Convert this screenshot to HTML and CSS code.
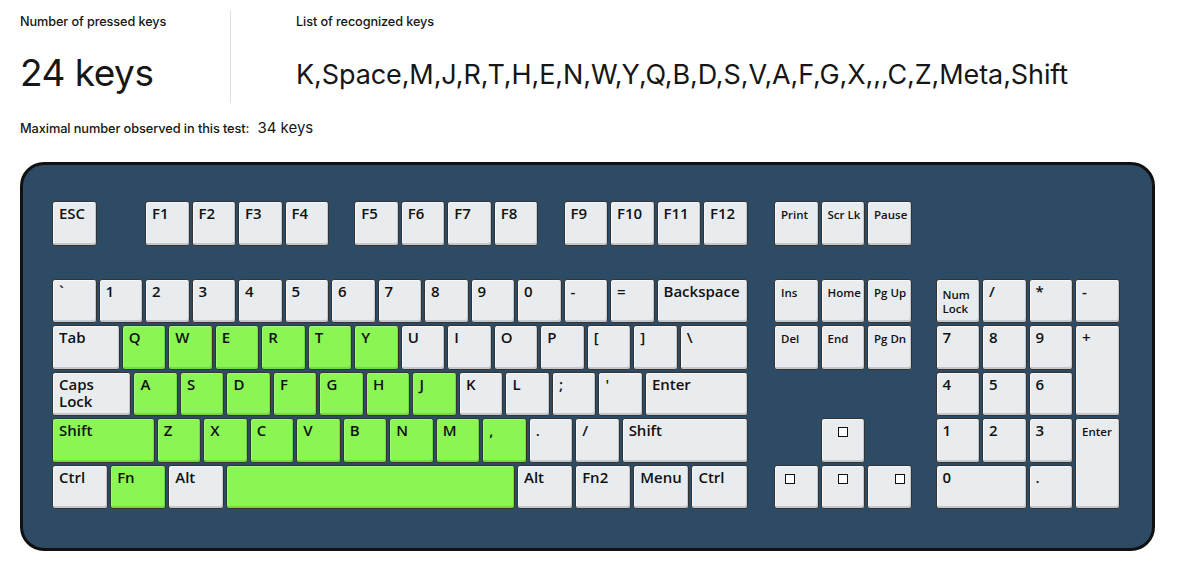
FILE: index.html
```html
<!DOCTYPE html>
<html lang="en">
<head>
<meta charset="utf-8">
<title>Keyboard test</title>
<link rel="stylesheet" href="styles.css">
</head>
<body>
<div class="page">
  <header class="stats">
    <div class="stat stat-count">
      <div class="stat-label">Number of pressed keys</div>
      <div class="stat-value">24 keys</div>
    </div>
    <div class="stat stat-list">
      <div class="stat-label">List of recognized keys</div>
      <div class="stat-list-value">K,Space,M,J,R,T,H,E,N,W,Y,Q,B,D,S,V,A,F,G,X,,,C,Z,Meta,Shift</div>
    </div>
  </header>
  <div class="max">
    <span class="max-label">Maximal number observed in this test:</span>
    <span class="max-value">34 keys</span>
  </div>

  <div class="keyboard">
    <div class="frow">
      <div class="key w1">ESC</div>
      <div class="sp-1"></div>
      <div class="key w1">F1</div>
      <div class="key w1">F2</div>
      <div class="key w1">F3</div>
      <div class="key w1">F4</div>
      <div class="sp-half"></div>
      <div class="key w1">F5</div>
      <div class="key w1">F6</div>
      <div class="key w1">F7</div>
      <div class="key w1">F8</div>
      <div class="sp-half"></div>
      <div class="key w1">F9</div>
      <div class="key w1">F10</div>
      <div class="key w1">F11</div>
      <div class="key w1">F12</div>
      <div class="sp-nav"></div>
      <div class="key w1 small">Print</div>
      <div class="key w1 small">Scr Lk</div>
      <div class="key w1 small">Pause</div>
    </div>

    <div class="lower">
      <div class="main">
        <div class="row">
          <div class="key w1">`</div>
          <div class="key w1">1</div>
          <div class="key w1">2</div>
          <div class="key w1">3</div>
          <div class="key w1">4</div>
          <div class="key w1">5</div>
          <div class="key w1">6</div>
          <div class="key w1">7</div>
          <div class="key w1">8</div>
          <div class="key w1">9</div>
          <div class="key w1">0</div>
          <div class="key w1">-</div>
          <div class="key w1">=</div>
          <div class="key w2">Backspace</div>
        </div>
        <div class="row">
          <div class="key w15">Tab</div>
          <div class="key w1 on">Q</div>
          <div class="key w1 on">W</div>
          <div class="key w1 on">E</div>
          <div class="key w1 on">R</div>
          <div class="key w1 on">T</div>
          <div class="key w1 on">Y</div>
          <div class="key w1">U</div>
          <div class="key w1">I</div>
          <div class="key w1">O</div>
          <div class="key w1">P</div>
          <div class="key w1">[</div>
          <div class="key w1">]</div>
          <div class="key w15">\</div>
        </div>
        <div class="row">
          <div class="key w175 two"><span class="ln">Caps</span><span class="ln">Lock</span></div>
          <div class="key w1 on">A</div>
          <div class="key w1 on">S</div>
          <div class="key w1 on">D</div>
          <div class="key w1 on">F</div>
          <div class="key w1 on">G</div>
          <div class="key w1 on">H</div>
          <div class="key w1 on">J</div>
          <div class="key w1">K</div>
          <div class="key w1">L</div>
          <div class="key w1">;</div>
          <div class="key w1">'</div>
          <div class="key w225">Enter</div>
        </div>
        <div class="row">
          <div class="key w225 on">Shift</div>
          <div class="key w1 on">Z</div>
          <div class="key w1 on">X</div>
          <div class="key w1 on">C</div>
          <div class="key w1 on">V</div>
          <div class="key w1 on">B</div>
          <div class="key w1 on">N</div>
          <div class="key w1 on">M</div>
          <div class="key w1 on">,</div>
          <div class="key w1">.</div>
          <div class="key w1">/</div>
          <div class="key w275">Shift</div>
        </div>
        <div class="row">
          <div class="key w125">Ctrl</div>
          <div class="key w125 on">Fn</div>
          <div class="key w125">Alt</div>
          <div class="key w625 on"></div>
          <div class="key w125">Alt</div>
          <div class="key w125">Fn2</div>
          <div class="key w125">Menu</div>
          <div class="key w125">Ctrl</div>
        </div>
      </div>

      <div class="nav">
        <div class="key small">Ins</div>
        <div class="key small">Home</div>
        <div class="key small">Pg Up</div>
        <div class="key small">Del</div>
        <div class="key small">End</div>
        <div class="key small">Pg Dn</div>
        <div class="key arrow arrow-up"><span class="sq"></span></div>
        <div class="key arrow arrow-left r5"><span class="sq"></span></div>
        <div class="key arrow arrow-down r5"><span class="sq"></span></div>
        <div class="key arrow arrow-right r5"><span class="sq"></span></div>
      </div>

      <div class="numpad">
        <div class="key small two numlock"><span class="ln">Num</span><span class="ln">Lock</span></div>
        <div class="key">/</div>
        <div class="key">*</div>
        <div class="key">-</div>
        <div class="key">7</div>
        <div class="key">8</div>
        <div class="key">9</div>
        <div class="key tall">+</div>
        <div class="key">4</div>
        <div class="key">5</div>
        <div class="key">6</div>
        <div class="key">1</div>
        <div class="key">2</div>
        <div class="key">3</div>
        <div class="key tall small">Enter</div>
        <div class="key wide">0</div>
        <div class="key">.</div>
      </div>
    </div>
  </div>
</div>
</body>
</html>
```

FILE: styles.css
```css
* { box-sizing: border-box; }

html, body {
  margin: 0;
  padding: 0;
  background: #ffffff;
}

body {
  font-family: "Inter", "Noto Sans", "Liberation Sans", sans-serif;
  color: #161616;
}

.page {
  padding: 10px 20px 0 20px;
}

/* ---------- header stats ---------- */
.stats {
  display: flex;
  height: 93px;
}

.stat-count {
  width: 211px;
  border-right: 1px solid #e0e0e0;
}

.stat-list {
  padding-left: 65px;
}

.stat-label {
  font-size: 12.7px;
  line-height: 18px;
  font-weight: 500;
  padding-top: 3px;
  letter-spacing: -0.1px;
}

.stat-value {
  font-size: 37px;
  line-height: 48px;
  font-weight: 400;
  margin-top: 18px;
  letter-spacing: -0.5px;
}

.stat-list-value {
  font-size: 27px;
  line-height: 40px;
  font-weight: 400;
  margin-top: 24px;
  letter-spacing: -0.1px;
}

.max {
  margin-top: 16px;
  height: 18px;
  line-height: 18px;
  display: flex;
  align-items: baseline;
  gap: 8px;
}

.max-label {
  font-size: 12.8px;
  font-weight: 500;
  letter-spacing: -0.1px;
}

.max-value {
  font-size: 15px;
  font-weight: 400;
}

/* ---------- keyboard ---------- */
.keyboard {
  margin-top: 25px;
  width: 1135px;
  height: 389px;
  background: #2d4b65;
  border: 3px solid #111111;
  border-radius: 24px;
  padding: 36px 0 0 29px;
  font-family: "Open Sans", "Noto Sans", "Liberation Sans", sans-serif;
}

.frow {
  display: flex;
  gap: 2px;
  height: 44.5px;
  margin-bottom: 33px;
}

.sp-1 { width: 44.5px; }
.sp-half { width: 21.25px; }
.sp-nav { width: 22.5px; }

.lower {
  display: flex;
  align-items: flex-start;
}

.main {
  display: flex;
  flex-direction: column;
  gap: 2px;
}

.row {
  display: flex;
  gap: 2px;
  height: 44.5px;
}

.key {
  height: 44.5px;
  background: #e9ecef;
  border: 1.5px solid #333333;
  border-radius: 3px;
  box-shadow: inset -1px -2px 0 #c4c8cc, inset 1px 1px 0 #f6f7f8;
  padding: 2px 0 0 6px;
  font-size: 15px;
  line-height: 18px;
  font-weight: 600;
  color: #111111;
  white-space: nowrap;
  overflow: hidden;
}

.key.on {
  background: #8bf554;
  box-shadow: inset -1px -2px 0 #74d945, inset 1px 1px 0 #a3f877;
}

.key.small {
  font-size: 11.5px;
  padding-top: 4px;
}

.key.two {
  display: flex;
  flex-direction: column;
  padding-top: 3px;
}

.key.two .ln {
  display: block;
  height: 17.5px;
  line-height: 17.5px;
}

.key.numlock {
  padding-top: 8px;
}

.key.numlock .ln {
  height: 14.5px;
  line-height: 14.5px;
}

.w1   { width: 44.5px; }
.w125 { width: 56.125px; }
.w15  { width: 67.75px; }
.w175 { width: 79.375px; }
.w2   { width: 91px; }
.w225 { width: 102.625px; }
.w275 { width: 125.875px; }
.w625 { width: 288.625px; }

.nav {
  margin-left: 26.5px;
  display: grid;
  grid-template-columns: repeat(3, 44.5px);
  grid-template-rows: repeat(5, 44.5px);
  gap: 2px;
}

.nav .key { width: auto; }

.arrow-up { grid-row: 4; grid-column: 2; }
.r5 { grid-row: 5; }

.arrow {
  display: flex;
  padding: 8px 0 0 0;
}

.arrow-left { justify-content: flex-start; padding-left: 9.5px; }
.arrow-up, .arrow-down { justify-content: center; }
.arrow-right { justify-content: flex-end; padding-right: 6px; }

.sq {
  display: block;
  width: 10px;
  height: 10px;
  border: 1.5px solid #111111;
  background: #ffffff;
}

.numpad {
  margin-left: 24px;
  display: grid;
  grid-template-columns: repeat(4, 44.5px);
  grid-auto-rows: 44.5px;
  gap: 2px;
}

.numpad .key { height: auto; }
.numpad .tall { grid-row: span 2; }
.numpad .wide { grid-column: span 2; }
```
